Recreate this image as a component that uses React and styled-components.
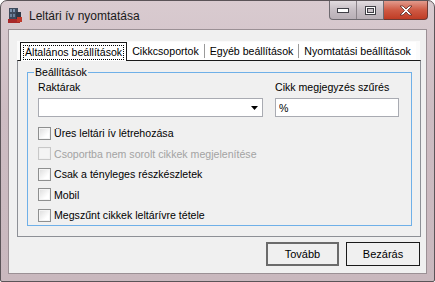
import React, { useState } from 'react';
import styled, { createGlobalStyle } from 'styled-components';

const GlobalStyle = createGlobalStyle`
    html, body {
        margin: 0;
        padding: 0;
        background: #ffffff;
    }
    body {
        font-family: "Liberation Sans", Arial, sans-serif;
        font-size: 10.6px;
        color: #000;
    }
`;

const Window = styled.div`
    width: 435px;
    height: 282px;
    box-sizing: border-box;
    display: flex;
    flex-direction: column;
    background: linear-gradient(#d9cbd0, #cdbcc2 40%, #c9b8be);
    border: 1px solid #5b5458;
    border-radius: 7px 7px 2px 2px;
    overflow: hidden;
`;

const TitleBar = styled.div`
    height: 28px;
    display: flex;
    align-items: flex-start;
    flex-shrink: 0;
`;

const TitleLeft = styled.div`
    display: flex;
    align-items: center;
    gap: 6px;
    padding: 6px 0 0 6px;
    flex: 1;
`;

const TitleText = styled.span`
    font-size: 12px;
    color: #1a1a1a;
`;

const CaptionButtons = styled.div`
    display: flex;
    margin-right: 6px;
`;

const CaptionGroup = styled.div`
    display: flex;
    height: 18px;
    border: 1px solid #6e6a70;
    border-top: none;
    border-radius: 0 0 0 4px;
    overflow: hidden;
    background: linear-gradient(#e2dce0, #c6bec4 50%, #b8afb6);
`;

const CaptionButton = styled.div`
    width: 26px;
    display: flex;
    align-items: center;
    justify-content: center;
    border-left: ${(p) => (p.first ? 'none' : '1px solid #8a8389')};
`;

const CloseButton = styled.div`
    width: 43px;
    height: 18px;
    display: flex;
    align-items: center;
    justify-content: center;
    border: 1px solid #6e3a34;
    border-top: none;
    border-left: none;
    border-radius: 0 0 4px 0;
    background: linear-gradient(#e29b8d, #cf5a44 50%, #c03c25);
`;

const Client = styled.div`
    flex: 1;
    margin: 0 7px 7px 7px;
    border: 1px solid #9b9095;
    background: #f0f0f0;
    display: flex;
    flex-direction: column;
    padding: 11px 5px 0 8px;
`;

const TabStrip = styled.div`
    display: flex;
    height: 19px;
    align-items: flex-end;
    background: #fbfbfb;
    margin-right: 1px;
`;

const Tab = styled.div`
    height: ${(p) => (p.active ? '19px' : '18px')};
    box-sizing: border-box;
    display: flex;
    align-items: center;
    flex-shrink: 0;
    white-space: nowrap;
    padding: 0 ${(p) => (p.active ? '2px' : '3px')};
    background: #ffffff;
    border: ${(p) => (p.active ? '1px solid #1a1a1a' : 'none')};
    border-bottom: none;
    margin-left: ${(p) => (p.active ? '3px' : '0')};
    position: relative;
    top: ${(p) => (p.active ? '1px' : '0')};
    cursor: default;
`;

const TabLabel = styled.span`
    padding: 0 1px;
    border: 1px ${(p) => (p.focused ? 'dotted #000' : 'solid transparent')};
    line-height: 13px;
`;

const TabSep = styled.div`
    width: 1px;
    height: 14px;
    margin-bottom: 2px;
    flex-shrink: 0;
    background: #9a9a9a;
`;

const TabPage = styled.div`
    height: 177px;
    box-sizing: border-box;
    border: 1px solid #8d9096;
    border-top: 1px solid #1a1a1a;
    padding: 5px 8px 0 9px;
    display: flex;
    flex-direction: column;
`;

const GroupBox = styled.fieldset`
    margin: 0;
    padding: 0 12px 0 10px;
    height: 160px;
    box-sizing: border-box;
    border: 1px solid #6fb0e8;
    display: flex;
    flex-direction: column;
`;

const Legend = styled.legend`
    padding: 0 1px;
    margin-left: -4px;
    line-height: 13px;
`;

const FieldRow = styled.div`
    display: flex;
    gap: 12px;
    margin-top: 2px;
`;

const Field = styled.div`
    display: flex;
    flex-direction: column;
    width: ${(p) => p.width}px;
    gap: 4px;
`;

const FieldLabel = styled.label`
    line-height: 13px;
    white-space: nowrap;
`;

const Combo = styled.div`
    height: 19px;
    box-sizing: border-box;
    background: #ffffff;
    border: 1px solid #a9abb2;
    display: flex;
    justify-content: flex-end;
    align-items: center;
    padding-right: 4px;
`;

const TextInput = styled.input`
    height: 19px;
    box-sizing: border-box;
    border: 1px solid #a9abb2;
    background: #ffffff;
    font: inherit;
    padding: 0 3px;
    outline: none;
`;

const CheckList = styled.div`
    display: flex;
    flex-direction: column;
    gap: 6.5px;
    margin-top: 9px;
`;

const CheckRow = styled.label`
    display: flex;
    align-items: center;
    gap: 3px;
    height: 14px;
    white-space: nowrap;
    color: ${(p) => (p.disabled ? '#a3a3a3' : '#000')};
    cursor: default;
`;

const Box = styled.span`
    width: 13px;
    height: 13px;
    flex-shrink: 0;
    box-sizing: border-box;
    border: 1px solid ${(p) => (p.disabled ? '#c8c8c8' : '#8e8f8f')};
    background: ${(p) =>
        p.disabled ? '#f4f4f4' : 'linear-gradient(135deg, #dcdcdc, #ffffff 70%)'};
    box-shadow: inset 0 0 0 1px ${(p) => (p.disabled ? '#f0f0f0' : '#f4f4f4')};
    display: inline-flex;
    align-items: center;
    justify-content: center;
    font-size: 10px;
    line-height: 1;
`;

const ButtonRow = styled.div`
    display: flex;
    justify-content: flex-end;
    gap: 7px;
    margin-top: 5px;
    padding-right: 1px;
`;

const Button = styled.button`
    width: ${(p) => p.width}px;
    height: 24px;
    font: inherit;
    font-size: 11px;
    color: #000;
    background: #f0f0f0;
    border: ${(p) => (p.primary ? '2px solid #6b6b6b' : '1px solid #1a1a1a')};
    padding: 0;
`;

const AppIcon = () => (
    <svg width="16" height="17" viewBox="0 0 16 17">
        <rect x="2" y="1" width="9" height="13" fill="#3e4a5c" />
        <rect x="3" y="2" width="2" height="3" fill="#7d93ad" />
        <rect x="6" y="2" width="2" height="3" fill="#7d93ad" />
        <rect x="3" y="7" width="2" height="3" fill="#6c819b" />
        <rect x="6" y="7" width="2" height="3" fill="#6c819b" />
        <rect x="9" y="5" width="5" height="9" fill="#2e3846" />
        <rect x="1" y="12" width="12" height="4" fill="#a8282a" />
        <rect x="10" y="10" width="5" height="5" fill="#c0392b" />
    </svg>
);

const tabs = ['Általános beállítások', 'Cikkcsoportok', 'Egyéb beállítások', 'Nyomtatási beállítások'];

const initialChecks = [
    { label: 'Üres leltári ív létrehozása', checked: false },
    { label: 'Csoportba nem sorolt cikkek megjelenítése', checked: false, disabled: true },
    { label: 'Csak a tényleges részkészletek', checked: false },
    { label: 'Mobil', checked: false },
    { label: 'Megszűnt cikkek leltárívre tétele', checked: false },
];

const App = () => {
    const [active, setActive] = useState(0);
    const [checks, setChecks] = useState(initialChecks);
    const [filter, setFilter] = useState('%');

    const toggle = (index) => {
        setChecks(checks.map((c, i) => (i === index && !c.disabled ? { ...c, checked: !c.checked } : c)));
    };

    return (
        <>
            <GlobalStyle />
            <Window>
                <TitleBar>
                    <TitleLeft>
                        <AppIcon />
                        <TitleText>Leltári ív nyomtatása</TitleText>
                    </TitleLeft>
                    <CaptionButtons>
                        <CaptionGroup>
                            <CaptionButton first>
                                <svg width="12" height="5" viewBox="0 0 12 5">
                                    <rect x="0.5" y="0.5" width="11" height="4" fill="#fff" stroke="#3f3f46" />
                                </svg>
                            </CaptionButton>
                            <CaptionButton>
                                <svg width="11" height="9" viewBox="0 0 11 9">
                                    <rect x="0.5" y="0.5" width="10" height="8" fill="#fff" stroke="#3f3f46" />
                                    <rect x="2.5" y="2.5" width="6" height="4" fill="#c9c2c8" stroke="#3f3f46" />
                                </svg>
                            </CaptionButton>
                        </CaptionGroup>
                        <CloseButton>
                            <svg width="14" height="11" viewBox="0 0 14 11">
                                <path
                                    d="M1 1 L4 1 L7 4 L10 1 L13 1 L8.5 5.5 L13 10 L10 10 L7 7 L4 10 L1 10 L5.5 5.5 Z"
                                    fill="#ffffff"
                                    stroke="#5a2a24"
                                    strokeWidth="0.8"
                                />
                            </svg>
                        </CloseButton>
                    </CaptionButtons>
                </TitleBar>
                <Client>
                    <TabStrip>
                        {tabs.map((t, i) => (
                            <React.Fragment key={t}>
                                {i > 1 && <TabSep />}
                                <Tab active={i === active} onClick={() => setActive(i)}>
                                    <TabLabel focused={i === active}>{t}</TabLabel>
                                </Tab>
                            </React.Fragment>
                        ))}
                    </TabStrip>
                    <TabPage>
                        <GroupBox>
                            <Legend>Beállítások</Legend>
                            <FieldRow>
                                <Field width={225}>
                                    <FieldLabel>Raktárak</FieldLabel>
                                    <Combo>
                                        <svg width="7" height="4" viewBox="0 0 7 4">
                                            <path d="M0 0 L7 0 L3.5 4 Z" fill="#000" />
                                        </svg>
                                    </Combo>
                                </Field>
                                <Field width={124}>
                                    <FieldLabel>Cikk megjegyzés szűrés</FieldLabel>
                                    <TextInput value={filter} onChange={(e) => setFilter(e.target.value)} />
                                </Field>
                            </FieldRow>
                            <CheckList>
                                {checks.map((c, i) => (
                                    <CheckRow key={c.label} disabled={c.disabled} onClick={() => toggle(i)}>
                                        <Box disabled={c.disabled}>{c.checked ? '✓' : ''}</Box>
                                        {c.label}
                                    </CheckRow>
                                ))}
                            </CheckList>
                        </GroupBox>
                    </TabPage>
                    <ButtonRow>
                        <Button primary width={73}>Tovább</Button>
                        <Button width={74}>Bezárás</Button>
                    </ButtonRow>
                </Client>
            </Window>
        </>
    );
};

export default App;
